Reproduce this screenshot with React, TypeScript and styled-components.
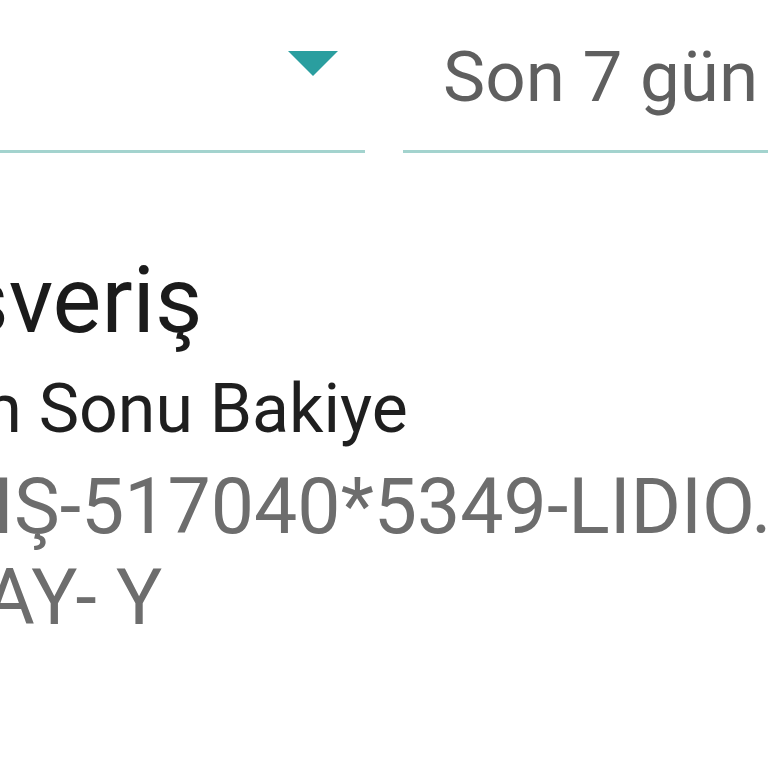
import React from "react";
import styled, { createGlobalStyle } from "styled-components";

const GlobalStyle = createGlobalStyle`
  html, body {
    margin: 0;
    padding: 0;
    background: #ffffff;
    overflow: hidden;
  }
  body {
    font-family: Roboto, "Noto Sans", "Liberation Sans", sans-serif;
    -webkit-font-smoothing: antialiased;
  }
`;

const Screen = styled.div`
  width: 768px;
  height: 768px;
  overflow: hidden;
  background: #ffffff;
`;

const FilterBar = styled.div`
  display: flex;
  gap: 38px;
  width: 900px;
`;

const Spinner = styled.div`
  flex: 0 0 365px;
  display: flex;
  justify-content: flex-end;
  align-items: flex-start;
  padding: 51px 27px 0 0;
  box-sizing: border-box;
  border-bottom: 3px solid #a3d3ce;
`;

const Caret = styled.span`
  width: 0;
  height: 0;
  border-left: 25px solid transparent;
  border-right: 25px solid transparent;
  border-top: 25px solid #2a9e9f;
`;

const PeriodField = styled.div`
  flex: 1;
  padding: 35px 0 32px 40px;
  border-bottom: 3px solid #a3d3ce;
`;

const PeriodText = styled.span`
  display: block;
  font-size: 71px;
  line-height: 83px;
  color: #5f5f5f;
  white-space: nowrap;
`;

const Transaction = styled.div`
  display: flex;
  flex-direction: column;
  margin: 96px 0 0 -144px;
  width: 1100px;
`;

const Title = styled.div`
  font-size: 92px;
  line-height: 104px;
  color: #1b1b1b;
  white-space: nowrap;
`;

const Subtitle = styled.div`
  margin-top: 16px;
  font-size: 68px;
  line-height: 80px;
  color: #1f1f1f;
  white-space: nowrap;
`;

const Description = styled.div`
  margin-top: 13px;
  font-size: 77px;
  line-height: 91px;
  color: #6d6d6d;
  white-space: nowrap;
`;

const DescLine = styled.span`
  display: block;
`;

export default function App() {
  return (
    <>
      <GlobalStyle />
      <Screen>
        <FilterBar>
          <Spinner>
            <Caret />
          </Spinner>
          <PeriodField>
            <PeriodText>Son 7 gün</PeriodText>
          </PeriodField>
        </FilterBar>
        <Transaction>
          <Title>Alışveriş</Title>
          <Subtitle>İşlem Sonu Bakiye</Subtitle>
          <Description>
            <DescLine>SATIŞ-517040*5349-LIDIO.COM</DescLine>
            <DescLine>LEPAY- Y</DescLine>
          </Description>
        </Transaction>
      </Screen>
    </>
  );
}
